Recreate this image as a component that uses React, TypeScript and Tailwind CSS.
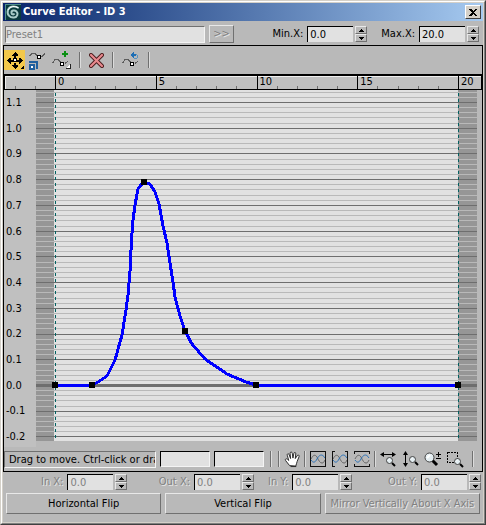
import React, { useState } from "react";

const RAISED =
  "border border-t-[#e8e8e8] border-l-[#e8e8e8] border-r-[#707070] border-b-[#707070]";
const SUNKEN =
  "border border-t-[#707070] border-l-[#707070] border-r-[#f4f4f4] border-b-[#f4f4f4]";

const levels = ["1.1", "1.0", "0.9", "0.8", "0.7", "0.6", "0.5", "0.4", "0.3", "0.2", "0.1", "0.0", "-0.1", "-0.2"];

// minor grid lines are 0.02 apart, every fifth one is a labelled level
const gridLines = Array.from({ length: 69 }, (_, i) => {
  const step = 57 - i;
  return { y: Math.round(295 - step * 5.145), major: step % 5 === 0, zero: step === 0 };
});

const curvePoints =
  "19,295 56,295 62,292 71,286 79,270 86,245 90,220 92,205 94,181 95,160 96,143 97,130 99,115 102,99 105,95 108,92 114,94 119,102 123,114 127,136 131,153 134,173 137,192 139,207 144,226 149,241 156,254 169,269 191,284 210,292 220,295 422,295";

const keys = [
  [19, 295],
  [56, 295],
  [108, 92],
  [149, 241],
  [220, 295],
  [422, 295],
];

const KeyBox = ({ x, y }: { x: number; y: number }) => (
  <rect x={x + 0.5} y={y + 0.5} width="3" height="3" fill="#fff" stroke="#000" />
);

const Magnifier = ({ x, y }: { x: number; y: number }) => (
  <g transform={`translate(${x} ${y})`}>
    <path d="M6 6l3 3" stroke="#000" strokeWidth="2" />
    <circle cx="3.5" cy="3.5" r="3" fill="#e4eef2" stroke="#444" />
    <path d="M2 3.5l1.5-1.5" stroke="#fff" />
  </g>
);

const MoveIcon = () => (
  <svg width="21" height="20" viewBox="0 0 21 20" shapeRendering="crispEdges">
    <path d="M11 2l3 3v1h-2v2h-2v-2h-2v-1zM11 19l3-3v-1h-2v-2h-2v2h-2v1zM3 10.500l3-3h1v2h2v2h-2v2h-1zM19 10.500l-3-3h-1v2h-2v2h2v2h1z" />
    <KeyBox x={9} y={8} />
    <path d="M20 15v4h-4z" />
  </svg>
);

const ScaleIcon = () => (
  <svg width="17" height="20" viewBox="0 0 17 20">
    <g shapeRendering="crispEdges">
      <path d="M0 5.500h1l2-2h3l4 4M12 6.500h1l3-3" fill="none" stroke="#5c5c5c" />
      <KeyBox x={8} y={5} />
      <path d="M0 12h8v7" fill="none" stroke="#1f5f9e" strokeWidth="2" />
      <rect x="1" y="15" width="4" height="4" fill="#fff" stroke="#1f5f9e" strokeWidth="2" />
    </g>
  </svg>
);

const AddIcon = () => (
  <svg width="19" height="20" viewBox="0 0 19 20" shapeRendering="crispEdges">
    <path d="M0 12.500h1l2-3h3l4 4M13 13.500l3-2.500" fill="none" stroke="#5c5c5c" />
    <KeyBox x={8} y={12} />
    <path d="M10 4h6M13 1v6" fill="none" stroke="#0a8f12" strokeWidth="2" />
    <path d="M18 14v4h-4z" fill="#fff" />
    <path d="M14 18.500h4.500v-4.500" fill="none" stroke="#222" />
  </svg>
);

const DeleteIcon = () => (
  <svg width="15" height="15" viewBox="0 0 15 15">
    <path d="M2 2l11 11M13 2l-11 11" stroke="#4a1a1c" strokeWidth="4" strokeLinecap="round" />
    <path d="M2 2l11 11M13 2l-11 11" stroke="#e88a8e" strokeWidth="2.200" strokeLinecap="round" />
  </svg>
);

const ResetIcon = () => (
  <svg width="18" height="20" viewBox="0 0 18 20" shapeRendering="crispEdges">
    <path d="M0 12.500h1l2-3h3l4 4M13 13.500l3-2.500" fill="none" stroke="#5c5c5c" />
    <KeyBox x={8} y={12} />
    <path d="M9 5l3-4v3h2v2h-2v3z" fill="#1f6fb5" />
    <path d="M14 4.500h1M15.500 5v3M12 8.500h3" stroke="#5a93c0" />
  </svg>
);

const HandIcon = () => (
  <svg width="16" height="17" viewBox="0 0 17 18">
    <path
      d="M6 15.500L2 10.500C0.500 8.500 2.500 7.500 4 9L5 10L3.500 4.500C3 2.500 5 2.500 5.500 4L7 8L6.500 2.500C6.500 0.500 8.500 0.500 8.800 2.500L9.500 7.500L10.500 2.500C11 0.800 12.800 1.300 12.500 3L12 8L14 5C15 3.500 16.500 4.500 16 6L14 11C13.500 13 13 14 12.500 16Z"
      fill="#fff"
      stroke="#222"
    />
    <path d="M7 16.500h6" stroke="#222" />
  </svg>
);

const FitIcon = ({ frame }: { frame: string }) => (
  <svg width="16" height="16" viewBox="0 0 16 16">
    <path d="M1 8C3 4 5 3 7 6C9 10 10 12 12 12C13.500 12 14 11 15 9" fill="none" stroke="#666" />
    <path d="M1 9C3 12 5 12 7 8C9 4 12 2 15 7" fill="none" stroke="#2a72b8" />
    <path d={frame} fill="none" stroke="#111" shapeRendering="crispEdges" />
  </svg>
);

const ZoomXIcon = () => (
  <svg width="17" height="17" viewBox="0 0 17 17">
    <path d="M1 3.500h14" stroke="#000" shapeRendering="crispEdges" />
    <path d="M4 1l-4 2.500l4 2.500zM12 1l4 2.500l-4 2.500z" />
    <Magnifier x={6} y={6} />
  </svg>
);

const ZoomYIcon = () => (
  <svg width="17" height="17" viewBox="0 0 17 17">
    <path d="M3.500 1v14" stroke="#000" shapeRendering="crispEdges" />
    <path d="M1 4l2.500-4l2.500 4zM1 12l2.500 4l2.500-4z" />
    <Magnifier x={7} y={5} />
  </svg>
);

const ZoomIcon = () => (
  <svg width="18" height="17" viewBox="0 0 18 17">
    <path d="M8 9l5 5" stroke="#000" strokeWidth="3" />
    <circle cx="5.500" cy="6.500" r="4.500" fill="#e4eef2" stroke="#444" />
    <path d="M3 7l3-3" stroke="#fff" strokeWidth="2" />
    <path d="M12 3.500h5M14.500 1v5M12 7.500h5" stroke="#000" shapeRendering="crispEdges" />
  </svg>
);

const ZoomRegionIcon = () => (
  <svg width="17" height="17" viewBox="0 0 17 17">
    <path
      d="M.5 1.500h10v10h-10z"
      fill="none"
      stroke="#000"
      strokeDasharray="2 1"
      shapeRendering="crispEdges"
    />
    <Magnifier x={7} y={7} />
  </svg>
);

const Logo = () => (
  <svg width="16" height="16" viewBox="0 0 16 16">
    <rect width="16" height="16" fill="#4f8f8c" />
    <rect x="1" y="1" width="15" height="15" fill="#0a3a3c" />
    <path
      d="M13.500 4C10 1.500 4.500 2 3 6C1.500 10.500 5 14 9 13.500C12.500 13 13.500 9.500 11.500 7.500C9.500 5.500 6 6.500 6.500 9C6.800 10.500 8.500 11 9.500 9.500"
      fill="none"
      stroke="#a9cdc8"
      strokeWidth="2"
    />
    <path d="M13.500 4C10 1.500 5 2 3 6" fill="none" stroke="#fff" />
  </svg>
);

const Separator = () => (
  <div className="h-4 w-0.5 shrink-0 border-l border-r border-l-[#707070] border-r-[#dcdcdc]" />
);

interface ToolProps {
  label: string;
  className?: string;
  children: React.ReactNode;
}

const Tool = ({ label, className = "", children }: ToolProps) => (
  <button type="button" aria-label={label} className={`flex shrink-0 ${className}`}>
    {children}
  </button>
);

interface SpinnerProps {
  id: string;
  label: string;
  initial: string;
  step?: number;
  disabled?: boolean;
}

const Spinner = ({ id, label, initial, step = 1, disabled }: SpinnerProps) => {
  const [value, setValue] = useState(initial);
  const change = (by: number) => setValue((Number(value) + by).toFixed(1));

  return (
    <div className="flex items-center">
      <label
        htmlFor={id}
        className={disabled ? "mr-1 text-[#808080] [text-shadow:1px_1px_#e6e6e6]" : "mr-1"}
      >
        {label}
      </label>
      <input
        id={id}
        value={value}
        disabled={disabled}
        onChange={(e) => setValue(e.target.value)}
        className="h-4 w-[46px] border-t border-l border-black bg-[#e1e1e1] px-0.5 outline-none disabled:text-[#808080]"
      />
      <div className="ml-0.5 flex w-3 flex-col">
        <button
          type="button"
          aria-label={`${label} up`}
          disabled={disabled}
          onClick={() => change(step)}
          className={`flex h-2 items-center justify-center ${RAISED}`}
        >
          <svg width="5" height="3" shapeRendering="crispEdges">
            <path d="M2 0h1v1h1v1h1v1h-5v-1h1v-1h1z" />
          </svg>
        </button>
        <button
          type="button"
          aria-label={`${label} down`}
          disabled={disabled}
          onClick={() => change(-step)}
          className={`flex h-2 items-center justify-center ${RAISED}`}
        >
          <svg width="5" height="3" shapeRendering="crispEdges">
            <path d="M0 0h5v1h-1v1h-1v1h-1v-1h-1v-1h-1z" />
          </svg>
        </button>
      </div>
    </div>
  );
};

const TitleBar = () => (
  <div className="flex h-[18px] items-center bg-linear-to-r from-[#0a246a] to-[#a6caf0] pr-0.5 pl-0.5">
    <Logo />
    <h1 className="ml-0.5 flex-1 font-bold text-white">Curve Editor - ID 3</h1>
    <button
      type="button"
      aria-label="Close"
      className="flex h-3.5 w-4 items-center justify-center border border-t-white border-l-white border-r-[#404040] border-b-[#404040] bg-[#d4d0c8]"
    >
      <svg width="8" height="7" shapeRendering="crispEdges">
        <path d="M0 0h2l2 2l2-2h2l-3 3.500l3 3.500h-2l-2-2l-2 2h-2l3-3.500z" />
      </svg>
    </button>
  </div>
);

const Ruler = () => (
  <div className="border border-t-2 border-black">
    <svg width="100%" height="13" className="block bg-[#c0c0c0]" shapeRendering="crispEdges">
      <path d="M0 .5h2000M.5 0v13" stroke="#f0f0f0" />
      {Array.from({ length: 23 }, (_, i) => {
        const tick = i - 2;
        const x = `${((50 + tick * 20.15) / 476) * 100}%`;
        return tick % 5 === 0 ? (
          <g key={tick}>
            <rect x={x} y="0" width="1" height="13" />
            <text x={x} y="9" dx="3">
              {tick}
            </text>
          </g>
        ) : (
          <rect key={tick} x={x} y="10" width="1" height="3" fill="#707070" />
        );
      })}
    </svg>
  </div>
);

const Graph = () => (
  <div className="flex pr-[5px] pb-1.5">
    <div className="-mb-1.5 flex w-8 shrink-0 flex-col justify-between bg-[#c0c0c0] pt-[5px] pl-0.5">
      {levels.map((level) => (
        <span key={level}>{level}</span>
      ))}
      <span className="-mt-2.5 h-0.5" />
    </div>
    <svg
      viewBox="0 0 441 351"
      preserveAspectRatio="none"
      className="block h-[351px] min-w-0 flex-1"
      shapeRendering="crispEdges"
    >
      <rect width="441" height="351" fill="#e1e1e1" />
      <rect width="18" height="351" fill="#969696" />
      <rect x="422" width="19" height="351" fill="#969696" />
      {gridLines.map(({ y, major, zero }) => (
        <rect
          key={y}
          y={zero ? y - 1 : y}
          width="441"
          height={zero ? 3 : 1}
          fill={major ? "#6e6e6e" : "#b9b9b9"}
        />
      ))}
      <path d="M19.500 3v348M422.500 3v348" stroke="#006060" strokeDasharray="3 3" />
      <polyline points={curvePoints} fill="none" stroke="#0000ff" strokeWidth="3" />
      {keys.map(([x, y]) => (
        <rect key={x} x={x - 3} y={y - 3} width="6" height="6" />
      ))}
    </svg>
  </div>
);

const StatusBar = () => (
  <div className="flex h-6 items-center">
    <div className={`h-[17px] w-[152px] shrink-0 overflow-hidden pl-1 whitespace-nowrap ${SUNKEN}`}>
      Drag to move. Ctrl-click or drag
    </div>
    <input
      aria-label="Point position"
      className="ml-1 h-4 w-[50px] border border-t-black border-r-[#f4f4f4] border-b-[#f4f4f4] border-l-black bg-[#e1e1e1]"
    />
    <input
      aria-label="Point value"
      className="ml-1 h-4 w-[50px] border border-t-black border-r-[#f4f4f4] border-b-[#f4f4f4] border-l-black bg-[#e1e1e1]"
    />
    <div className="ml-1.5 flex flex-1 items-center gap-1 pr-2">
      <div className="flex gap-1.5">
        <Separator />
        <Separator />
      </div>
      <Tool label="Pan">
        <HandIcon />
      </Tool>
      <Separator />
      <div className="flex gap-1.5">
        <Tool label="Zoom extents">
          <FitIcon frame="M.5 .5h15v15h-15z" />
        </Tool>
        <Tool label="Zoom horizontal extents">
          <FitIcon frame="M3 .5h-2.500v15h2.500M13 .5h2.500v15h-2.500" />
        </Tool>
        <Tool label="Zoom vertical extents">
          <FitIcon frame="M.5 3v-2.500h15v2.500M.5 13v2.500h15v-2.500" />
        </Tool>
      </div>
      <Separator />
      <div className="flex gap-[5px]">
        <Tool label="Zoom horizontally">
          <ZoomXIcon />
        </Tool>
        <Tool label="Zoom vertically">
          <ZoomYIcon />
        </Tool>
        <Tool label="Zoom">
          <ZoomIcon />
        </Tool>
        <Tool label="Zoom region">
          <ZoomRegionIcon />
        </Tool>
      </div>
      <div className="ml-auto">
        <Separator />
      </div>
    </div>
  </div>
);

const App = () => {
  const [preset, setPreset] = useState("Preset1");

  return (
    <div className="border border-t-[#d4d0c8] border-r-[#404040] border-b-[#404040] border-l-[#d4d0c8] font-['DejaVu_Sans_Condensed','DejaVu_Sans',sans-serif] text-[11px] leading-4 text-black">
      <div className="border border-t-white border-r-[#808080] border-b-[#808080] border-l-white">
        <div className="border border-[#d4d0c8] bg-[#b9b9b9]">
          <TitleBar />

          <div className="flex h-6 items-center pt-0.5 pr-1 pl-0.5">
            <input
              aria-label="Preset name"
              value={preset}
              onChange={(e) => setPreset(e.target.value)}
              className={`h-[17px] w-[200px] bg-[#e1e1e1] text-[#808080] outline-none ${SUNKEN}`}
            />
            <button
              type="button"
              disabled
              className={`ml-1 h-[18px] w-[25px] text-[#808080] [text-shadow:1px_1px_#e6e6e6] ${RAISED}`}
            >
              &gt;&gt;
            </button>
            <div className="ml-auto flex gap-3.5">
              <Spinner id="minX" label="Min.X:" initial="0.0" />
              <Spinner id="maxX" label="Max.X:" initial="20.0" />
            </div>
          </div>

          <div className="border border-black">
            <div className="flex h-7 items-center">
              <Tool label="Move point" className="mr-1 bg-[#f2c84b]">
                <MoveIcon />
              </Tool>
              <Tool label="Scale point" className="mr-1.5">
                <ScaleIcon />
              </Tool>
              <Tool label="Add point" className="mr-2">
                <AddIcon />
              </Tool>
              <Separator />
              <Tool label="Delete point" className="mx-2">
                <DeleteIcon />
              </Tool>
              <Separator />
              <Tool label="Reset curve" className="mr-2 ml-2">
                <ResetIcon />
              </Tool>
              <Separator />
            </div>
            <Ruler />
            <Graph />
            <StatusBar />
          </div>

          <div className="grid grid-cols-2 gap-3.5 pt-0.5 pr-0.5 pl-[38px]">
            <div className="flex justify-between">
              <Spinner id="inX" label="In X:" initial="0.0" disabled />
              <Spinner id="outX" label="Out X:" initial="0.0" disabled />
            </div>
            <div className="flex justify-between">
              <Spinner id="inY" label="In Y:" initial="0.0" disabled />
              <Spinner id="outY" label="Out Y:" initial="0.0" disabled />
            </div>
          </div>

          <div className="grid grid-cols-3 gap-1 px-[3px] pt-[3px] pb-2">
            <button type="button" className={`h-[21px] ${RAISED}`}>
              Horizontal Flip
            </button>
            <button type="button" className={`h-[21px] ${RAISED}`}>
              Vertical Flip
            </button>
            <button
              type="button"
              disabled
              className={`h-[21px] whitespace-nowrap text-[#808080] [text-shadow:1px_1px_#e6e6e6] ${RAISED}`}
            >
              Mirror Vertically About X Axis
            </button>
          </div>
        </div>
      </div>
    </div>
  );
};

export default App;
